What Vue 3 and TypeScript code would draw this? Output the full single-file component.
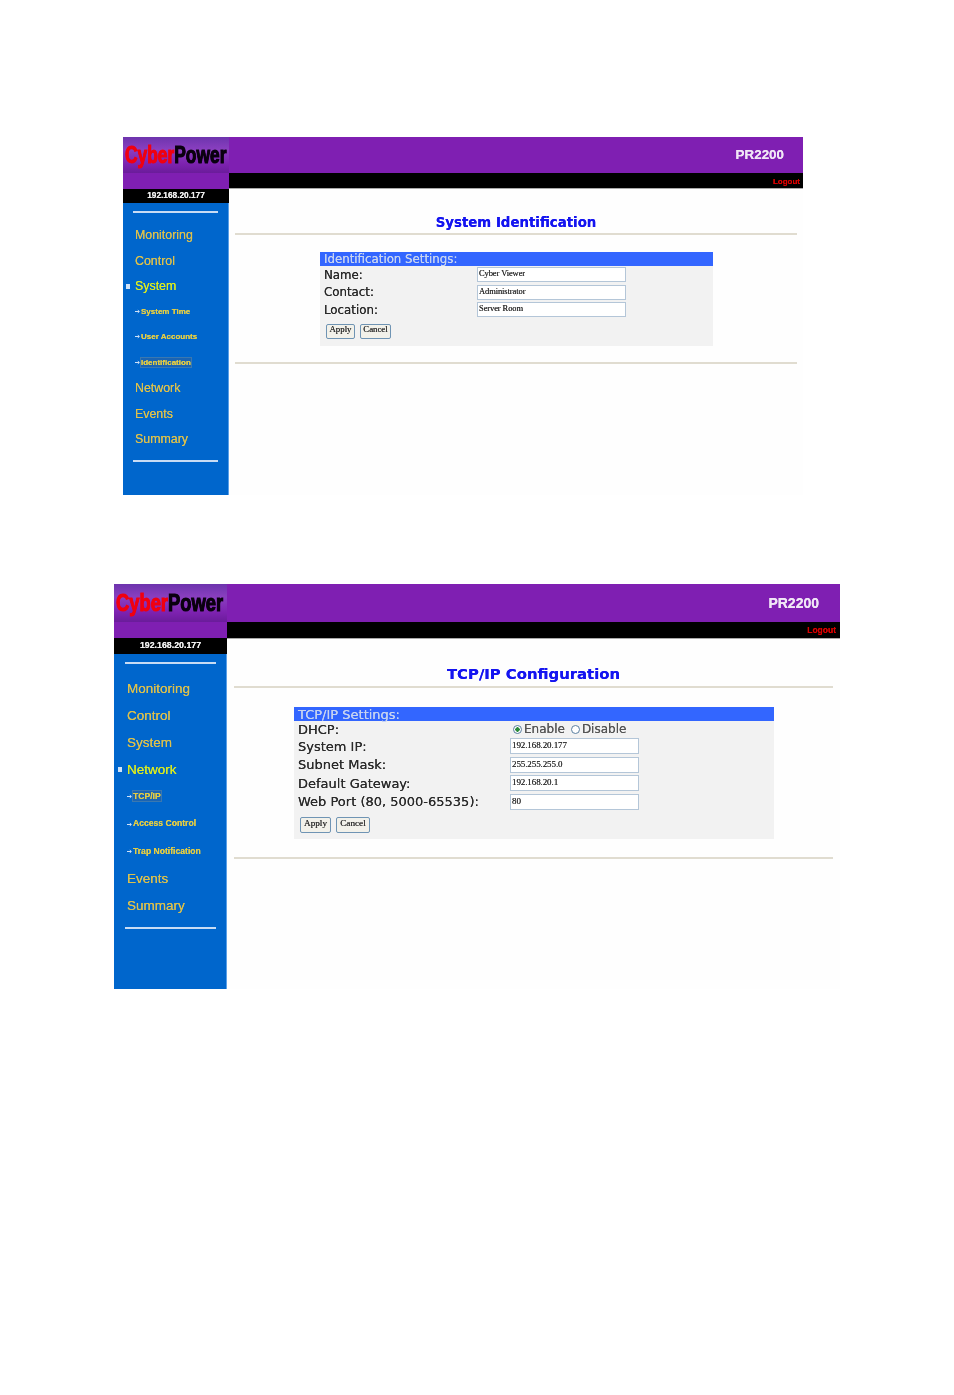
<script setup lang="ts">
interface NavItem { label: string; sub?: boolean; active?: boolean; boxed?: boolean }
interface Field { label: string; value?: string; radio?: boolean }
interface Screen {
  theme: string; ip: string; title: string; panel: string;
  nav: NavItem[]; fields: Field[];
}
const screens: Screen[] = [
  {
    theme: 'one', ip: '192.168.20.177', title: 'System Identification', panel: 'Identification Settings:',
    nav: [
      { label: 'Monitoring' }, { label: 'Control' }, { label: 'System', active: true },
      { label: 'System Time', sub: true }, { label: 'User Accounts', sub: true },
      { label: 'Identification', sub: true, boxed: true },
      { label: 'Network' }, { label: 'Events' }, { label: 'Summary' },
    ],
    fields: [
      { label: 'Name:', value: 'Cyber Viewer' },
      { label: 'Contact:', value: 'Administrator' },
      { label: 'Location:', value: 'Server Room' },
    ],
  },
  {
    theme: 'two', ip: '192.168.20.177', title: 'TCP/IP Configuration', panel: 'TCP/IP Settings:',
    nav: [
      { label: 'Monitoring' }, { label: 'Control' }, { label: 'System' },
      { label: 'Network', active: true },
      { label: 'TCP/IP', sub: true, boxed: true }, { label: 'Access Control', sub: true },
      { label: 'Trap Notification', sub: true },
      { label: 'Events' }, { label: 'Summary' },
    ],
    fields: [
      { label: 'DHCP:', radio: true },
      { label: 'System IP:', value: '192.168.20.177' },
      { label: 'Subnet Mask:', value: '255.255.255.0' },
      { label: 'Default Gateway:', value: '192.168.20.1' },
      { label: 'Web Port (80, 5000-65535):', value: '80' },
    ],
  },
];
</script>

<template>
  <div class="page">
    <section v-for="s in screens" :key="s.theme" class="screen" :class="s.theme">
      <aside class="side">
        <div class="logo"><span class="logo-text"><span class="red">Cyber</span>Power</span></div>
        <div class="band"></div>
        <div class="ip">{{ s.ip }}</div>
        <nav class="nav">
          <div class="rule"></div>
          <ul class="menu">
            <li v-for="n in s.nav" :key="n.label" class="item" :class="{ sub: n.sub, active: n.active }">
              <span v-if="n.active" class="bullet"></span>
              <svg v-if="n.sub" class="arrow" viewBox="0 0 5 5" width="5" height="5">
                <path d="M0 2.5H4M2.8 1.2L4.4 2.5L2.8 3.8" fill="none" stroke="#cfe2f8" stroke-width="1" />
              </svg>
              <span :class="{ boxed: n.boxed }">{{ n.label }}</span>
            </li>
          </ul>
          <div class="rule"></div>
        </nav>
      </aside>
      <div class="main">
        <header class="head">PR2200</header>
        <div class="bar"><span class="logout">Logout</span></div>
        <div class="content">
          <h1 class="title">{{ s.title }}</h1>
          <div class="hr"></div>
          <form class="panel">
            <div class="panel-head">{{ s.panel }}</div>
            <div v-for="f in s.fields" :key="f.label" class="row" :class="{ radio: f.radio }">
              <span class="label">{{ f.label }}</span>
              <span v-if="f.radio" class="radios">
                <span class="dot on"></span>Enable
                <span class="dot second"></span>Disable
              </span>
              <span v-else class="input">{{ f.value }}</span>
            </div>
            <div class="btns">
              <span class="btn apply">Apply</span>
              <span class="btn cancel">Cancel</span>
            </div>
          </form>
          <div class="hr lower"></div>
        </div>
      </div>
    </section>
  </div>
</template>

<style scoped>
.page {
  height: 1395px;
  background: #fff;
  overflow: hidden;
  display: flex;
  flex-direction: column;
}
.screen {
  display: flex;
  filter: blur(0.6px);
  text-shadow: 0 0 0.6px currentColor;
  font-family: "Liberation Sans", Arial, sans-serif;
}
.one {
  margin: 137px 0 0 123px;
  width: 680px;
  height: 358px;
  --side: 106px;
  --logo: 36px;
  --band: 16px;
  --ip: 14px;
  --ipfs: 8.3px;
  --rule-l: 10px;
  --rule-w: 85px;
  --rule-top: 8px;
  --nav-left: 12px;
  --step: 25.5px;
  --menu-top: 10px;
  --menu-bottom: 7px;
  --fs: 12.4px;
  --subfs: 8px;
  --sub-adj: 2px;
  --headfs: 13.4px;
  --barh: 15px;
  --logo-scale: 0.79;
  --logo-fs: 22px;
  --title-fs: 13.35px;
  --title-top: 24px;
  --title-mb: 0px;
  --hr-m: 6px;
  --hr-r: 6px;
  --panel-l: 91px;
  --panel-w: 393px;
  --panel-top: 17px;
  --panel-gap: 16px;
  --panel-hh: 14px;
  --panel-fs: 11.8px;
  --col: 157px;
  --row: 17.5px;
  --input-w: 149px;
  --input-h: 15px;
  --input-fs: 8.5px;
  --btn-top: 5px;
  --btn-h: 15px;
  --btn-pb: 7px;
  --apply: 29px;
  --cancel: 31px;
  --btn-fs: 8.8px;
  --head-r: 19px;
  --logout: 8px;
  --logout-r: 3px;
}
.two {
  margin: 89px 0 0 114px;
  width: 726px;
  height: 405px;
  --side: 113px;
  --logo: 38px;
  --band: 16px;
  --ip: 16px;
  --ipfs: 8.8px;
  --rule-l: 11px;
  --rule-w: 91px;
  --rule-top: 8px;
  --nav-left: 13px;
  --step: 27.2px;
  --menu-top: 10.5px;
  --menu-bottom: 8px;
  --fs: 13.5px;
  --subfs: 8.6px;
  --sub-adj: 0px;
  --headfs: 14px;
  --barh: 16px;
  --logo-scale: 0.815;
  --logo-fs: 22.5px;
  --title-fs: 14.85px;
  --title-top: 25px;
  --title-mb: 2px;
  --hr-m: 7px;
  --hr-r: 7px;
  --panel-l: 67px;
  --panel-w: 480px;
  --panel-top: 19px;
  --panel-gap: 18px;
  --panel-hh: 14px;
  --panel-fs: 13px;
  --col: 216px;
  --row: 18.5px;
  --input-w: 129px;
  --input-h: 16px;
  --input-fs: 9px;
  --btn-top: 6px;
  --btn-h: 16px;
  --btn-pb: 6px;
  --apply: 31px;
  --cancel: 34px;
  --btn-fs: 9.2px;
  --head-r: 21px;
  --logout: 8.5px;
  --logout-r: 4px;
}
.side {
  width: var(--side);
  flex: none;
  display: flex;
  flex-direction: column;
}
.logo {
  height: var(--logo);
  background: linear-gradient(#6d34ad 0%, #8a3fc0 35%, #7d22b0 75%, #6a1c9a 100%);
  display: flex;
  align-items: center;
  overflow: hidden;
}
.logo-text {
  display: inline-block;
  transform: scale(var(--logo-scale), 1.08);
  transform-origin: left center;
  margin-left: 2px;
  font-size: var(--logo-fs);
  font-weight: 700;
  white-space: nowrap;
  color: #0a0010;
  -webkit-text-stroke: 1px currentColor;
}
.red { color: #f00010; }
.band { height: var(--band); background: #7f1fb2; }
.ip {
  height: var(--ip);
  background: #000;
  color: #eee;
  font-size: var(--ipfs);
  font-weight: 700;
  text-align: center;
  line-height: calc(var(--ip) - 2px);
}
.nav {
  flex: 1;
  background: #0066cc;
  border-right: 1px solid #5aa0e8;
  padding-top: var(--rule-top);
  box-sizing: border-box;
}
.rule {
  height: 2px;
  width: var(--rule-w);
  margin-left: var(--rule-l);
  background: #c8dcf4;
}
.menu {
  list-style: none;
  margin: 0;
  padding: var(--menu-top) 0 var(--menu-bottom) var(--nav-left);
}
.item {
  position: relative;
  height: var(--step);
  line-height: var(--step);
  font-size: var(--fs);
  color: #dcc04c;
  white-space: nowrap;
}
.item.active { color: #dcec1e; }
.item.sub {
  font-size: var(--subfs);
  font-weight: 700;
  color: #e2cc44;
  line-height: calc(var(--step) - var(--sub-adj));
}
.bullet {
  position: absolute;
  left: -9px;
  top: 50%;
  width: 4px;
  height: 5px;
  margin-top: -3px;
  background: #cfe2f8;
}
.arrow {
  margin-right: 1px;
  vertical-align: middle;
}
.boxed {
  background: #1a64b4;
  outline: 1px solid #3a78b0;
}
.main {
  flex: 1;
  min-width: 0;
  display: flex;
  flex-direction: column;
}
.head {
  height: var(--logo);
  background: #7f1fb2;
  color: #f0e6f6;
  font-size: var(--headfs);
  font-weight: 700;
  text-align: right;
  padding-right: var(--head-r);
  line-height: var(--logo);
}
.bar {
  height: var(--barh);
  background: #000;
  border-bottom: 1px solid #aaa;
  text-align: right;
  line-height: calc(var(--barh) - 4px);
  padding-right: var(--logout-r);
}
.logout {
  display: inline-block;
  color: #d80000;
  font-size: var(--logout);
  font-weight: 700;
}
.content {
  flex: 1;
  background: #fefefe;
  padding: var(--title-top) var(--hr-r) 0 var(--hr-m);
}
.title {
  margin: 0 0 var(--title-mb);
  height: 20px;
  line-height: 20px;
  text-align: center;
  font-family: "DejaVu Sans", Verdana, sans-serif;
  font-size: var(--title-fs);
  font-weight: 700;
  color: #1414f0;
}
.hr {
  height: 2px;
  background: #e0dcd0;
}
.hr.lower { margin-top: var(--panel-gap); }
.panel {
  margin: var(--panel-top) 0 0 calc(var(--panel-l) - var(--hr-m));
  width: var(--panel-w);
  background: #f2f2f2;
  font-family: "DejaVu Sans", Verdana, sans-serif;
  font-size: var(--panel-fs);
  color: #2a2a2a;
  padding-bottom: var(--btn-pb);
}
.panel-head {
  height: var(--panel-hh);
  line-height: calc(var(--panel-hh) + 1px);
  background: #3366ff;
  color: #c8d4f0;
  padding-left: 4px;
}
.row {
  height: var(--row);
  display: flex;
  align-items: center;
  padding-left: 4px;
}
.row.radio { height: 16px; }
.label {
  width: calc(var(--col) - 4px);
  flex: none;
  white-space: nowrap;
}
.input {
  width: var(--input-w);
  height: var(--input-h);
  box-sizing: border-box;
  background: #fff;
  border: 1px solid #b4c6d8;
  font-family: "Liberation Serif", serif;
  font-size: var(--input-fs);
  line-height: calc(var(--input-h) - 4px);
  color: #333;
  padding-left: 1px;
  white-space: nowrap;
  letter-spacing: -0.1px;
}
.radios {
  display: flex;
  align-items: center;
  color: #555;
  margin-left: 3px;
  font-size: 12px;
}
.dot {
  width: 7px;
  height: 7px;
  margin-right: 2px;
  border: 1px solid #5a7fa0;
  border-radius: 50%;
  background: #fff;
}
.dot.on { background: radial-gradient(circle, #2a8a3a 0 2px, #fff 2.4px); }
.dot.second { margin-left: 6px; }
.btns {
  display: flex;
  gap: 5px;
  padding: var(--btn-top) 0 0 6px;
}
.btn {
  box-sizing: border-box;
  height: var(--btn-h);
  border: 1.5px solid #6f94b4;
  border-radius: 2px;
  background: #f2f1ea;
  font-family: "Liberation Serif", serif;
  font-size: var(--btn-fs);
  line-height: calc(var(--btn-h) - 6px);
  color: #333;
  text-align: center;
}
.apply { width: var(--apply); }
.cancel { width: var(--cancel); }
</style>
